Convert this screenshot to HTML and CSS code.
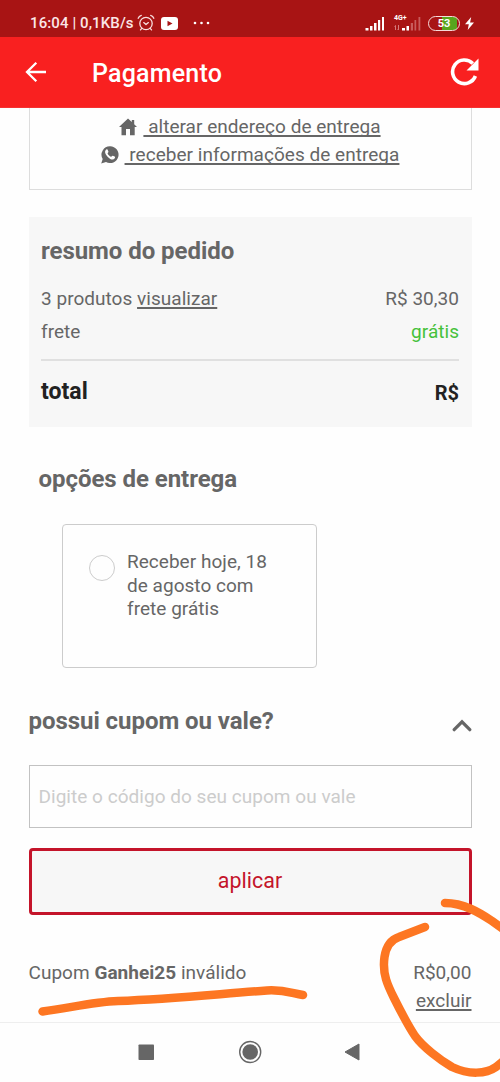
FILE: index.html
```html
<!DOCTYPE html>
<html lang="pt-BR">
<head>
<meta charset="utf-8">
<title>Pagamento</title>
<link rel="stylesheet" href="styles.css">
</head>
<body>
<div class="screen">
  <div class="status">
    <span class="clock">16:04 | 0,1KB/s</span>
    <svg class="alarm" width="18" height="18" viewBox="0 0 18 18" fill="none" stroke="#f8dede" stroke-width="1.3" stroke-linecap="round" stroke-linejoin="round"><circle cx="9" cy="9.5" r="6.2"/><path d="M6.7 8.6 9 10.6l2.4-2M1.2 4.3Q2 2 4.3 1.4M13.7 1.4Q16 2 16.8 4.3M4.8 14.3l-1.3 1.6M13.2 14.3l1.3 1.6"/></svg>
    <svg class="video" width="17" height="13" viewBox="0 0 17 13"><rect width="17" height="13" rx="3" fill="#fff"/><path d="M6.5 3.7v5.6l5-2.8z" fill="#a81414"/></svg>
    <svg class="dots" width="18" height="4" viewBox="0 0 18 4" fill="#fff"><circle cx="2" cy="2" r="1.3"/><circle cx="8.5" cy="2" r="1.3"/><circle cx="15" cy="2" r="1.3"/></svg>
    <svg class="signal" width="20" height="15" viewBox="0 0 20 15" fill="#fff"><path d="M.5 12h3v2.500h-3zM5 10h2.500v4.500H5zM9 7h2.500v7.500H9zM13 4h2.200v10.500H13zM17 1h2v13.500h-2z"/></svg>
    <span class="mobile">
      <span class="net">4G+</span>
      <svg class="bars" width="27" height="15" viewBox="0 0 27 15"><path d="M1.500 14V9.500M.5 10.500l1-1M4.500 9v5M3.500 13l1 1" stroke="#d57a7a" fill="none"/><g fill="#fff"><path d="M8 12h3v2.500H8zM12.500 10H15v4.500h-2.500z"/></g><g fill="#c85c5c"><path d="M16.800 7H19v7.500h-2.200zM20.500 4h1.700v10.500h-1.700zM24.500 1h1.800v13.500h-1.800z"/></g></svg>
    </span>
    <span class="battery">53</span>
    <svg class="bolt" width="9" height="13" viewBox="0 0 9 13" fill="#fff"><path d="M6.200 0 0 7.200h3.800L2.700 13 9 5.400H5.100z"/></svg>
  </div>
  <header class="bar">
    <svg class="back" width="22" height="22" viewBox="0 0 22 22" fill="none" stroke="#fff" stroke-width="2.300"><path d="M21 11H2M11.300 1.700 2 11l9.300 9.300"/></svg>
    <h1 class="title">Pagamento</h1>
    <svg class="reload" width="30" height="30" viewBox="0 0 30 30"><path d="M25.400 19A11.800 11.800 0 1 1 22.800 6.500" fill="none" stroke="#fff" stroke-width="3.600"/><path d="M28.500 1.500v12H16.500z" fill="#fff"/></svg>
  </header>
  <main class="content">
    <section class="address">
      <div class="link-row">
        <svg width="18" height="18" viewBox="0 0 18 18" fill="#666"><path d="M9 .5 12.800 4V2h2.400v4.200L18 9h-2.300v8.200H11V11H7v6.200H2.500V9H0z"/></svg>
        <a class="link link-address">&nbsp;alterar endereço de entrega</a>
      </div>
      <div class="link-row">
        <svg width="18" height="18" viewBox="0 0 18 18"><path d="M9.200.3A8.400 8.400 0 1 1 5 16L.2 17.500 1.700 13A8.400 8.400 0 0 1 9.200.3z" fill="#666"/><path d="M5.300 3.500C3.200 5.300 4 8 6.800 10.900c2.700 2.700 5.400 3.500 7 1.300.5-.8.3-1.300-.2-1.600l-1.700-.9c-.9-.3-1.200 1-2 1C8.500 10.200 7 8.700 6.600 7.500c0-.6 1.100-1 .8-1.900l-.8-1.900c-.3-.5-.8-.5-1.300-.2z" fill="#fff"/></svg>
        <a class="link link-info">&nbsp;receber informações de entrega</a>
      </div>
    </section>
    <section class="summary">
      <h2 class="heading heading-summary">resumo do pedido</h2>
      <div class="row"><span>3 produtos <a class="link">visualizar</a></span><span>R$ 30,30</span></div>
      <div class="row"><span>frete</span><span class="free">grátis</span></div>
      <div class="total"><span class="total-label">total</span><span class="total-value">R$</span></div>
    </section>
    <h2 class="heading heading-delivery">opções de entrega</h2>
    <label class="option"><span class="radio"></span><span class="option-text">Receber hoje, 18<br>de agosto com<br>frete grátis</span></label>
    <div class="coupon-head">
      <h2 class="heading">possui cupom ou vale?</h2>
      <svg class="chevron" width="20" height="13" viewBox="0 0 20 13" fill="none" stroke="#666" stroke-width="3.200" stroke-linecap="round"><path d="M2.200 10.700 10 2.800l7.800 7.900"/></svg>
    </div>
    <div class="field">Digite o código do seu cupom ou vale</div>
    <div class="apply">aplicar</div>
    <div class="result">
      <span>Cupom <b>Ganhei25</b> inválido</span>
      <span class="result-side"><span class="zero">R$0,00</span><a class="link">excluir</a></span>
    </div>
  </main>
  <nav class="nav">
    <svg width="500" height="59" viewBox="0 0 500 59"><rect x="138.500" y="21.500" width="15.500" height="15.500" rx=".8" fill="#666"/><circle cx="250.200" cy="29" r="10.500" fill="none" stroke="#666" stroke-width="1.400"/><circle cx="250.200" cy="29" r="7.800" fill="#666"/><path d="M345 29l14-8v16z" fill="#666" stroke="#666" stroke-linejoin="round"/></svg>
  </nav>
  <svg class="ink" width="500" height="1082" viewBox="0 0 500 1082" fill="none" stroke="#fd7622" stroke-width="8.500" stroke-linecap="round" stroke-linejoin="round"><path d="M42.500 1011.500C70 1008 92 1002 118 1001C172 999 218 994 267 990.500C284 989.500 291 993 303 995"/><path d="M425 927 399 937C390 940 386 947 384.500 957C382 974 388 986 394 998C402 1014 407 1024 415 1036C423 1047 440 1060 452 1067C469 1075 486 1074 496 1067L506 1059"/><path d="M445 903C464 903 480 913 492 921L506 931"/></svg>
</div>
</body>
</html>
```
FILE: styles.css
```css
* { box-sizing: border-box; }
body { margin: 0; background: #fefefe; color: #666; font: 19px/28px Roboto, sans-serif; letter-spacing: .03px; }
h1, h2 { margin: 0; }
svg { display: block; flex: none; }
span, a, h1, h2 { white-space: nowrap; }
.screen { position: relative; width: 500px; height: 1082px; overflow: hidden; display: flex; flex-direction: column; background: #fefefe; }
.status { height: 37px; flex: none; display: flex; align-items: center; padding: 9px 26px 0 30px; background: #a81414; color: #fbe6e6; }
.clock { width: 107px; font-size: 15px; line-height: 20px; font-weight: 500; letter-spacing: .1px; }
.video { margin-left: 6px; }
.dots { margin-left: 15px; }
.signal { margin-left: auto; }
.mobile { position: relative; margin-left: 9px; height: 15px; }
.net { position: absolute; left: 0; top: -1px; font-size: 7px; line-height: 7px; font-weight: 700; color: #fff; }
.battery { width: 32px; height: 15px; margin: 0 5px 0 7px; border: 1.5px solid #f6dada; border-radius: 8px; background: linear-gradient(90deg, #a81414 45%, #58a51d 45%, #58a51d 92%, #a81414 92%); color: #fff; font-size: 11px; line-height: 13px; font-weight: 700; text-align: center; }
.bar { height: 71px; flex: none; display: flex; align-items: center; padding: 0 20px 0 25px; background: #f92020; color: #fff; border-bottom: 1px solid #f53232; }
.title { margin-left: 45px; font-size: 25px; line-height: 32px; font-weight: 500; letter-spacing: .2px; padding-top: 3px; }
.reload { margin-left: auto; }
.content { flex: 1; padding: 0 28.5px; }
.address { height: 82px; padding-top: 5px; border: 1px solid #ddd; border-top: 0; }
.link-row { display: flex; justify-content: center; align-items: center; gap: 6px; height: 28px; }
.link { text-decoration: underline; text-decoration-thickness: 1.5px; text-underline-offset: 2px; text-decoration-skip-ink: none; }
.heading { font-size: 24px; line-height: 32px; font-weight: 700; letter-spacing: -.05px; }
.summary { height: 210px; margin-top: 27px; padding: 18px 12.5px 0; background: #f7f7f7; }
.heading-summary { margin-bottom: 15px; }
.row { display: flex; justify-content: space-between; height: 33px; line-height: 33px; }
.free { color: #45c13a; }
.total { display: flex; justify-content: space-between; margin-top: 11px; padding-top: 15px; border-top: 2px solid #e0e0e0; color: #222; font-weight: 700; }
.total-label { font-size: 23px; line-height: 32px; }
.total-value { font-size: 20px; line-height: 35px; }
.heading-delivery { margin: 36px 0 0 10px; }
.option { display: flex; width: 255px; height: 144px; margin: 29px 0 0 33.500px; padding: 25px 0 0 26px; border: 1.500px solid #ccc; border-radius: 4px; }
.radio { width: 26px; height: 26px; margin: 5px 12px 0 0; border: 1.500px solid #ccc; border-radius: 50%; }
.option-text { line-height: 23.500px; }
.coupon-head { display: flex; justify-content: space-between; height: 32px; margin-top: 37px; }
.chevron { margin-top: 14px; }
.field { height: 63px; margin-top: 28px; padding-left: 9px; border: 1px solid #c2c2c2; color: #ccc; line-height: 62px; }
.apply { height: 67px; margin-top: 19.500px; border: 3px solid #c4142a; border-radius: 4px; background: #f7f7f7; color: #c4142a; font-size: 21.400px; line-height: 60px; text-align: center; }
.result { display: flex; justify-content: space-between; margin-top: 44px; }
.result-side { display: flex; flex-direction: column; align-items: flex-end; }
.nav { height: 60px; flex: none; border-top: 1px solid #eee; }
.ink { position: absolute; left: 0; top: 0; }
```
